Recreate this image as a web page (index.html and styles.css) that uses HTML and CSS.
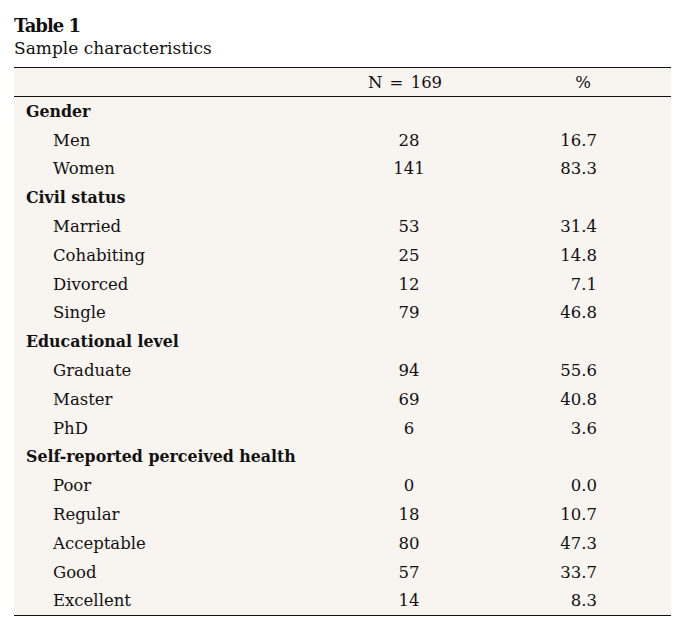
FILE: index.html
```html
<!DOCTYPE html>
<html>
<head>
<meta charset="utf-8">
<link rel="stylesheet" href="styles.css">
</head>
<body>
<div class="page">
  <div class="caption">
    <div class="title">Table 1</div>
    <div class="subtitle">Sample characteristics</div>
  </div>
  <div class="table">
    <div class="row head"><span class="c1"></span><span class="c2">N = 169</span><span class="c3">%</span></div>
    <div class="body">
      <div class="row group"><span class="c1">Gender</span></div>
      <div class="row"><span class="c1 ind">Men</span><span class="c2">28</span><span class="c3">16.7</span></div>
      <div class="row"><span class="c1 ind">Women</span><span class="c2">141</span><span class="c3">83.3</span></div>
      <div class="row group"><span class="c1">Civil status</span></div>
      <div class="row"><span class="c1 ind">Married</span><span class="c2">53</span><span class="c3">31.4</span></div>
      <div class="row"><span class="c1 ind">Cohabiting</span><span class="c2">25</span><span class="c3">14.8</span></div>
      <div class="row"><span class="c1 ind">Divorced</span><span class="c2">12</span><span class="c3">7.1</span></div>
      <div class="row"><span class="c1 ind">Single</span><span class="c2">79</span><span class="c3">46.8</span></div>
      <div class="row group"><span class="c1">Educational level</span></div>
      <div class="row"><span class="c1 ind">Graduate</span><span class="c2">94</span><span class="c3">55.6</span></div>
      <div class="row"><span class="c1 ind">Master</span><span class="c2">69</span><span class="c3">40.8</span></div>
      <div class="row"><span class="c1 ind">PhD</span><span class="c2">6</span><span class="c3">3.6</span></div>
      <div class="row group"><span class="c1">Self-reported perceived health</span></div>
      <div class="row"><span class="c1 ind">Poor</span><span class="c2">0</span><span class="c3">0.0</span></div>
      <div class="row"><span class="c1 ind">Regular</span><span class="c2">18</span><span class="c3">10.7</span></div>
      <div class="row"><span class="c1 ind">Acceptable</span><span class="c2">80</span><span class="c3">47.3</span></div>
      <div class="row"><span class="c1 ind">Good</span><span class="c2">57</span><span class="c3">33.7</span></div>
      <div class="row"><span class="c1 ind">Excellent</span><span class="c2">14</span><span class="c3">8.3</span></div>
    </div>
  </div>
</div>
</body>
</html>
```
FILE: styles.css
```css
html, body {
  margin: 0;
  padding: 0;
  background: #ffffff;
}
.page {
  padding: 15px 13px 0 14px;
  font-family: "DejaVu Serif", "Liberation Serif", serif;
  color: #111111;
}
.caption {
  display: flex;
  flex-direction: column;
  margin-bottom: 8px;
}
.title {
  font-weight: bold;
  font-size: 18px;
  letter-spacing: -1px;
  line-height: 22px;
}
.subtitle {
  font-size: 17px;
  line-height: 22px;
}
.table {
  background: #f8f4f0;
  border-top: 1.5px solid #111;
  border-bottom: 1.5px solid #111;
}
.head {
  border-bottom: 1.5px solid #111;
}
.row {
  display: grid;
  grid-template-columns: 335px 120px 128px;
  height: 28.8px;
  align-items: center;
  font-size: 16.5px;
}
.head {
  height: 28px;
}
.c1 {
  padding-left: 12px;
}
.group .c1 {
  font-weight: bold;
  font-size: 15.8px;
  white-space: nowrap;
}
.c1.ind {
  padding-left: 39px;
}
.c2 {
  text-align: center;
}
.head .c2 {
  word-spacing: 2px;
  padding-right: 8px;
}
.c3 {
  text-align: right;
}
.head .c3 {
  text-align: center;
  padding-left: 100px;
}
```
